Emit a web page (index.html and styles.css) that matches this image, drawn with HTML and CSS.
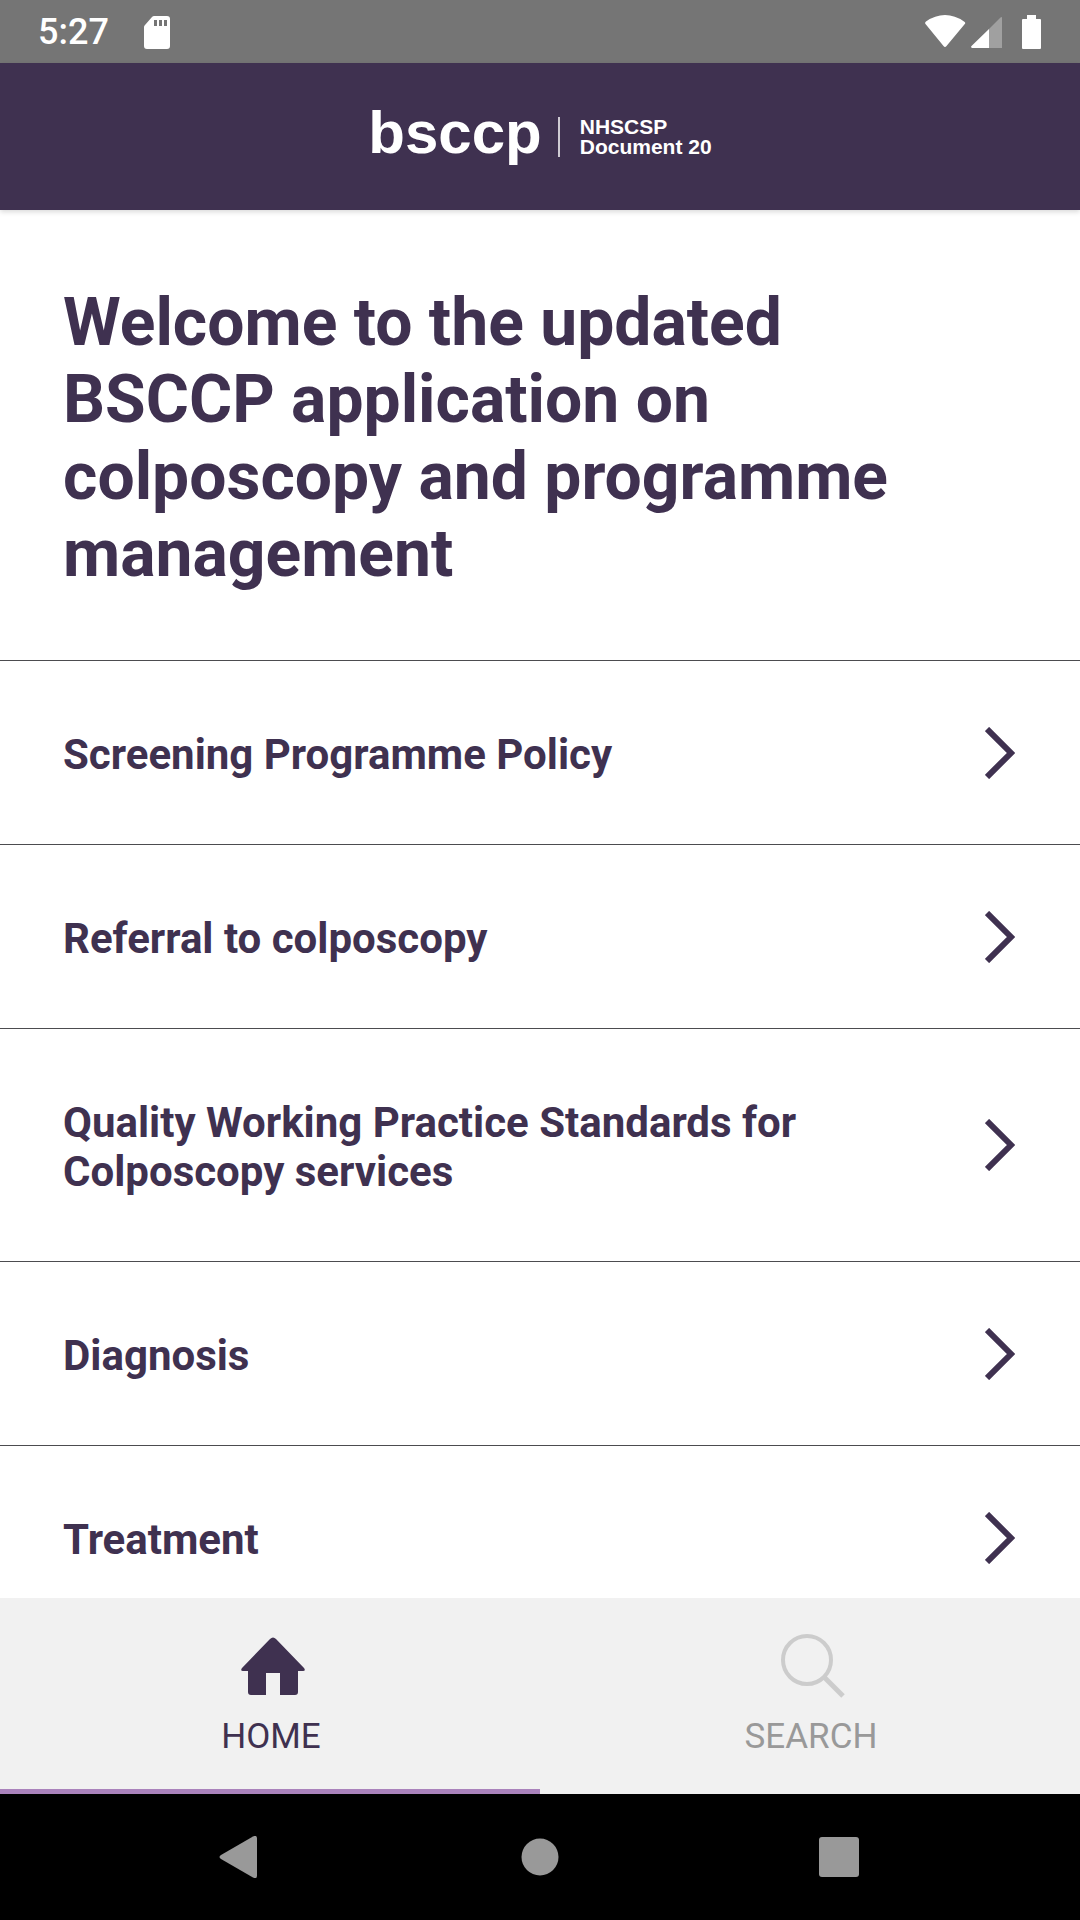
FILE: index.html
```html
<!DOCTYPE html>
<html lang="en">
<head>
    <meta charset="UTF-8">
    <meta name="viewport" content="width=device-width, initial-scale=1">
    <title>BSCCP - NHSCSP Document 20</title>
    <link rel="stylesheet" href="styles.css">
</head>
<body>
    <div class="status-bar">
        <div class="status-left">
            <span>5:27</span>
            <svg width="26" height="33" viewBox="0 0 26 33">
                <path fill="#fff" fill-rule="evenodd" d="M10 0H23Q26 0 26 3V30Q26 33 23 33H3Q0 33 0 30V11Q0 10 1 9L8 1Q9 0 10 0ZM10 4V10H13V4ZM15 4V10H18V4ZM20 4V10H23V4Z"/>
            </svg>
        </div>
        <div class="status-right">
            <svg width="117" height="34" viewBox="0 0 117 34">
                <path fill="#fff" d="M0.500 9Q-0.500 7.500 1 6.500Q10 0 20 0T39 6.500Q41 7.500 39.800 9L21.500 31Q20 33 18.500 31Z"/>
                <path fill="#a0a0a0" d="M64 14L75 3Q77 1 77 3V33H64Z"/>
                <path fill="#fff" d="M64 14V33H47Q45 32 46.500 31Z"/>
                <path fill="#fff" d="M102 0H111V4H115Q116 4 116 5V33Q116 34 115 34H98Q97 34 97 33V5Q97 4 98 4H102Z"/>
            </svg>
        </div>
    </div>

    <header class="app-header">
        <span class="logo">bsccp</span>
        <span class="logo-text">NHSCSP<br>Document 20</span>
    </header>

    <main class="content">
        <h1>Welcome to the updated BSCCP application on colposcopy and programme management</h1>
        <nav class="topics">
            <a href="#screening">
                <span>Screening Programme Policy</span>
                <svg class="chevron" viewBox="0 0 30 52"><path d="M2 2L26 26L2 50"/></svg>
            </a>
            <a href="#referral">
                <span>Referral to colposcopy</span>
                <svg class="chevron" viewBox="0 0 30 52"><path d="M2 2L26 26L2 50"/></svg>
            </a>
            <a href="#quality">
                <span>Quality Working Practice Standards for Colposcopy services</span>
                <svg class="chevron" viewBox="0 0 30 52"><path d="M2 2L26 26L2 50"/></svg>
            </a>
            <a href="#diagnosis">
                <span>Diagnosis</span>
                <svg class="chevron" viewBox="0 0 30 52"><path d="M2 2L26 26L2 50"/></svg>
            </a>
            <a href="#treatment">
                <span>Treatment</span>
                <svg class="chevron" viewBox="0 0 30 52"><path d="M2 2L26 26L2 50"/></svg>
            </a>
        </nav>
    </main>

    <nav class="tabs">
        <a class="tab active" href="#home">
            <svg width="68" height="64" viewBox="-4 0 68 64">
                <path fill="#3f3150" d="M29 5Q32 2 35 5L63 34Q65 37 62 37H57V58Q57 61 54 61H39V39H25V61H10Q7 61 7 58V37H2Q-1 37 1 34Z"/>
            </svg>
            <span>HOME</span>
        </a>
        <a class="tab" href="#search">
            <svg width="68" height="64" viewBox="-4 0 68 64">
                <circle cx="26" cy="26" r="24" fill="none" stroke="#ccc" stroke-width="4"/>
                <path d="M43 43L62 62" stroke="#ccc" stroke-width="5"/>
            </svg>
            <span>SEARCH</span>
        </a>
    </nav>

    <div class="system-nav">
        <button aria-label="Back">
            <svg width="42" height="42" viewBox="0 0 42 42"><path fill="#999" d="M34 0.500Q38 -1.500 38 2.500V39.500Q38 43.500 34 41.500L2 23Q-1 21 2 19Z"/></svg>
        </button>
        <button aria-label="Home">
            <svg width="42" height="42" viewBox="0 0 42 42"><circle cx="21" cy="21" r="18.500" fill="#999"/></svg>
        </button>
        <button aria-label="Recent apps">
            <svg width="42" height="42" viewBox="0 0 42 42"><rect x="0" y="1" width="40" height="40" rx="3" fill="#999"/></svg>
        </button>
    </div>
</body>
</html>
```
FILE: styles.css
```css
* { box-sizing: border-box; }
body { margin: 0; height: 100vh; display: flex; flex-direction: column; font-family: Roboto, sans-serif; color: #3f3150; background: #fff; }
a { color: inherit; text-decoration: none; }
svg { display: block; flex-shrink: 0; }

.status-bar { height: 63px; padding: 1px 38px 0; display: flex; align-items: center; justify-content: space-between; background: #757575; color: #fff; font-size: 36px; line-height: 42px; font-weight: 500; }
.status-left { display: flex; align-items: center; gap: 35px; }

.app-header { position: relative; height: 147px; display: flex; align-items: center; justify-content: center; background: #3f3150; color: #fff; font-family: "Liberation Sans", Arial, sans-serif; font-weight: bold; box-shadow: 0 2px 5px rgba(0, 0, 0, 0.15); }
.logo { font-size: 60px; line-height: 68px; padding-bottom: 8px; margin-right: 16px; }
.logo-text { font-size: 21px; line-height: 20px; padding-left: 20px; border-left: 2px solid #cfcbd3; }

.content { flex: 1; min-height: 0; overflow-y: auto; scrollbar-width: none; }
h1 { margin: 0; padding: 74px 128px 68px 63px; font-size: 66px; line-height: 77px; font-weight: bold; }
.topics a { display: flex; align-items: center; justify-content: space-between; gap: 64px; padding: 69px 65px 65px 63px; border-top: 1px solid #4c4c4f; font-size: 42px; line-height: 49px; font-weight: bold; }
.chevron { width: 30px; height: 52px; margin-top: -4px; fill: none; stroke: #3f3150; stroke-width: 6; }

.tabs { display: flex; background: #f1f1f1; }
.tab { flex: 1; height: 196px; padding: 36px 0 0 2px; display: flex; flex-direction: column; align-items: center; gap: 18px; border-bottom: 5px solid transparent; color: #999; font-size: 35px; line-height: 41px; }
.tab.active { color: #3f3150; border-color: #aa83bc; }

.system-nav { height: 126px; padding: 0 90px; display: flex; align-items: center; background: #000; }
.system-nav button { flex: 1; padding: 0; border: none; background: none; display: flex; justify-content: center; cursor: pointer; }
```
